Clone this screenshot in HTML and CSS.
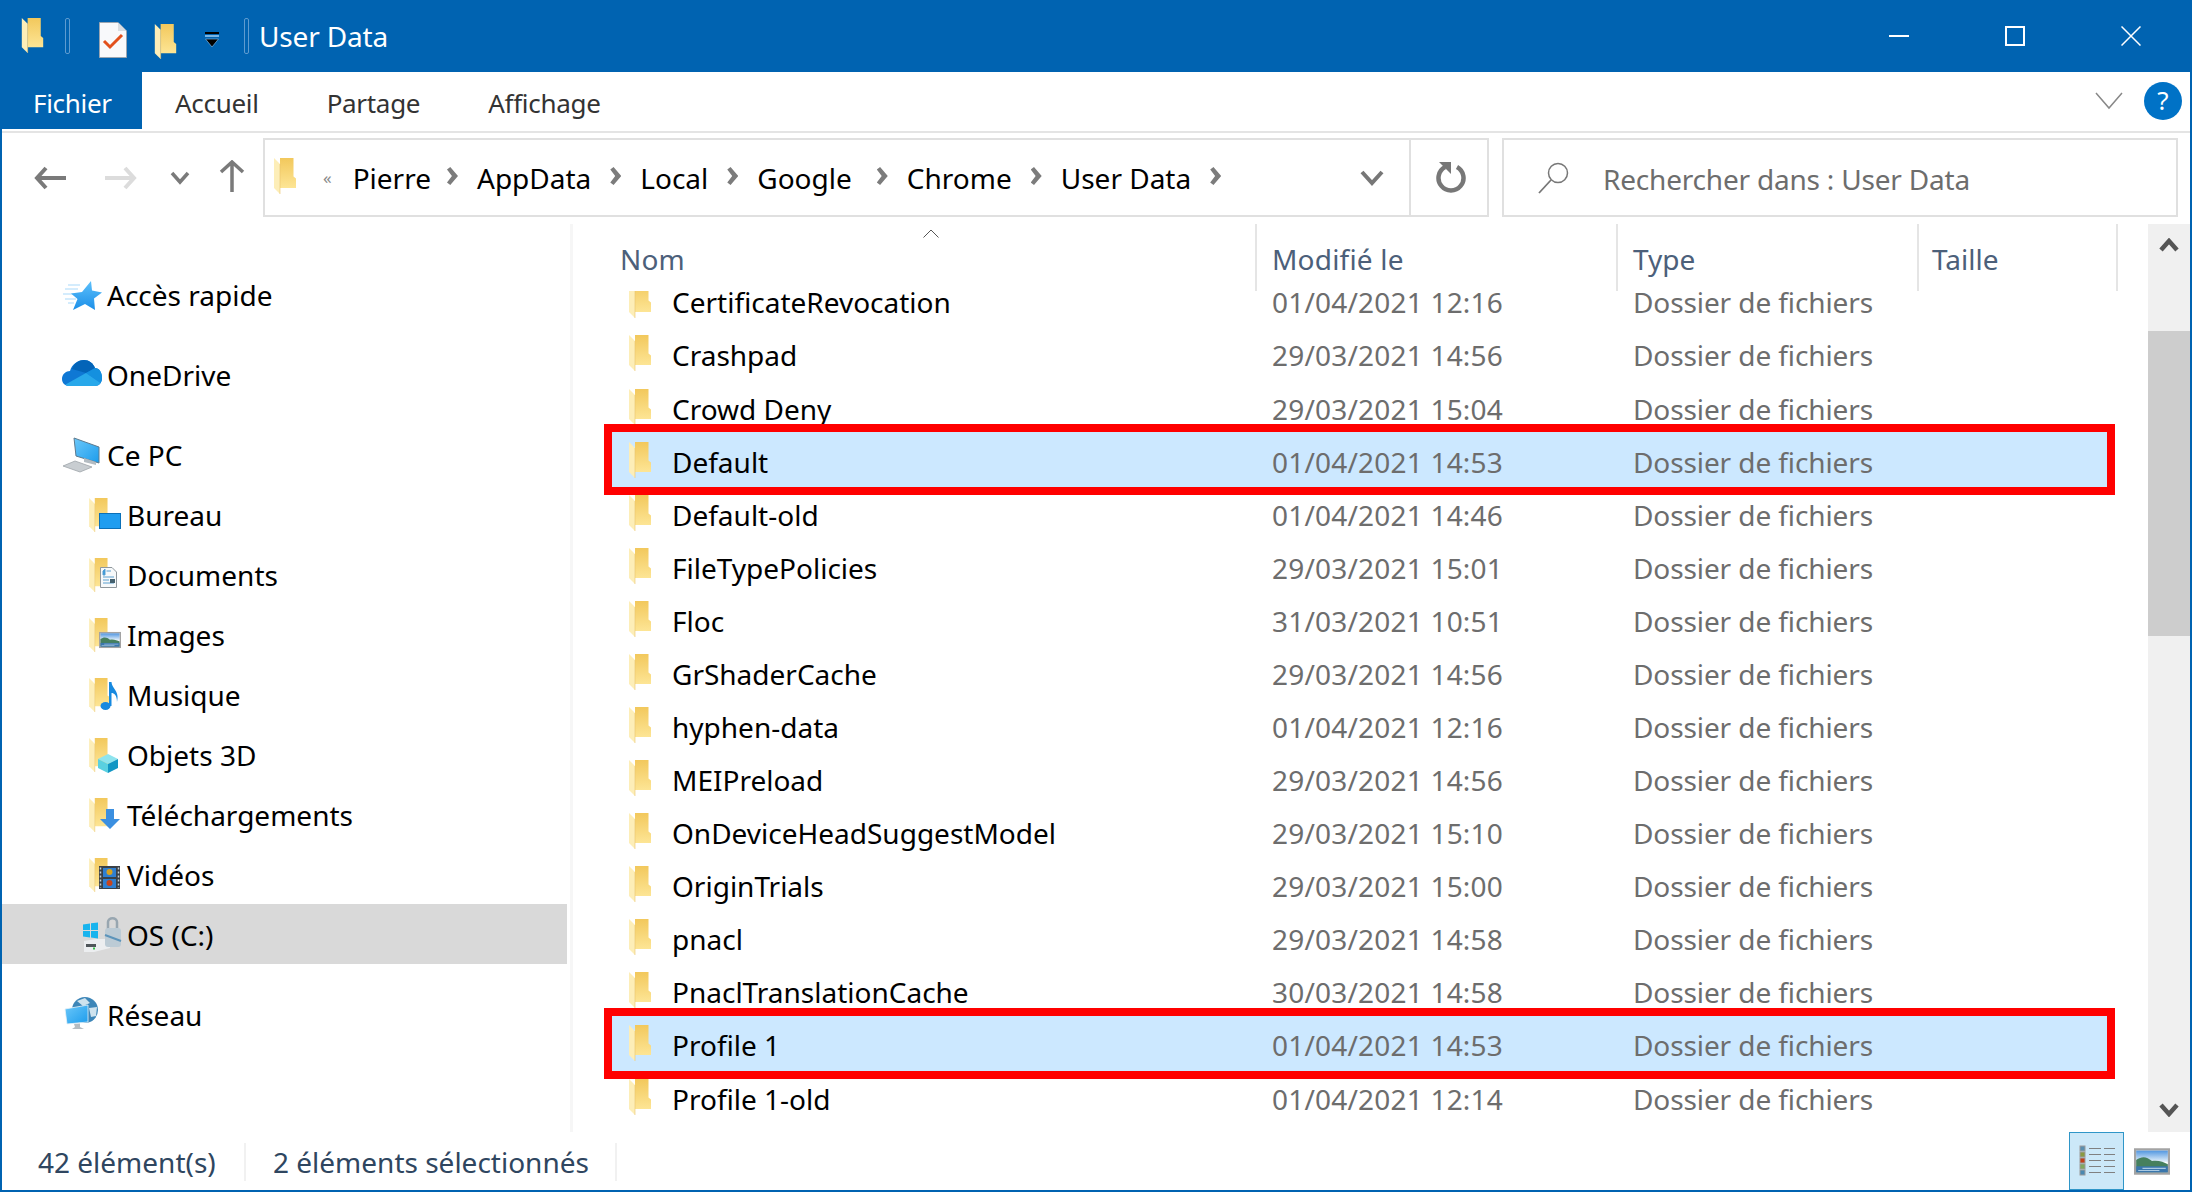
FILE: index.html
```html
<!DOCTYPE html>
<html lang="fr">
<head>
    <meta charset="UTF-8">
    <title>User Data</title>
    <link rel="stylesheet" href="styles.css">
</head>
<body>

    <!-- Shared shapes -->
    <svg class="sprite" width="0" height="0">
        <defs>
            <linearGradient id="folderBack" x1="0" y1="0" x2="0" y2="1">
                <stop offset="0" stop-color="#f2c85c"/>
                <stop offset="1" stop-color="#fde595"/>
            </linearGradient>
            <linearGradient id="starFill" x1="0" y1="0" x2="0" y2="1">
                <stop offset="0" stop-color="#5cc0fb"/>
                <stop offset="1" stop-color="#1c8fe8"/>
            </linearGradient>
            <linearGradient id="screenFill" x1="0" y1="0" x2="1" y2="1">
                <stop offset="0" stop-color="#6cc8fa"/>
                <stop offset="1" stop-color="#1c9cec"/>
            </linearGradient>
            <linearGradient id="skyFill" x1="0" y1="0" x2="0" y2="1">
                <stop offset="0" stop-color="#4f95e0"/>
                <stop offset="1" stop-color="#e8f3fb"/>
            </linearGradient>
            <symbol id="folder" viewBox="0 0 22 36">
                <path d="M0 0H19.500V18.500L22 20.500V30H6V0Z" fill="url(#folderBack)"/>
                <path d="M0 0L6 6V36L0 30Z" fill="#fdeeb8"/>
                <path d="M6 6V36" stroke="#e9c56c" stroke-width="0.600"/>
            </symbol>
            <symbol id="photo" viewBox="0 0 34 25">
                <rect x="0" y="0" width="34" height="25" fill="#fff"/>
                <rect x="2" y="2" width="30" height="11" fill="url(#skyFill)"/>
                <path d="M2 11C8 7 12 8 17 12C23 11 28 13 32 15V23H2Z" fill="#46805e"/>
                <rect x="2" y="17" width="30" height="6" fill="#3a76ac"/>
                <path d="M8 19H30M4 21H24" stroke="#a9c9e2" stroke-width="1"/>
                <rect x="1" y="1" width="32" height="23" fill="none" stroke="#a3a3a3" stroke-width="2"/>
            </symbol>
        </defs>
    </svg>

    <div class="window">

        <!-- Title bar -->
        <div class="titlebar">
            <svg class="qa-folder first"><use href="#folder"/></svg>
            <span class="qa-sep sep-one"></span>
            <svg class="qa-doc" viewBox="0 0 28 36">
                <path d="M0.500 0.500H19L27.500 9V35.500H0.500Z" fill="#f8f9fb" stroke="#9aa5b1"/>
                <path d="M19 0.500V9H27.500Z" fill="#d8dde2"/>
                <path d="M5 19L11 25L23 13" fill="none" stroke="#e2501c" stroke-width="3"/>
            </svg>
            <svg class="qa-folder second"><use href="#folder"/></svg>
            <svg class="qa-drop" viewBox="0 0 14 16">
                <rect x="0" y="0" width="14" height="2" fill="#000"/>
                <rect x="0" y="3" width="14" height="2" fill="#79b4e4"/>
                <path d="M0.500 7H13.500L7 15Z" fill="#000" stroke="#79b4e4" stroke-width="0.700"/>
            </svg>
            <span class="qa-sep sep-two"></span>
            <span class="title-text">User Data</span>
            <div class="win-controls">
                <span class="win-btn"><svg width="20" height="20"><rect x="0" y="9" width="20" height="2" fill="#fff"/></svg></span>
                <span class="win-btn"><svg width="20" height="20"><rect x="1" y="1" width="18" height="18" fill="none" stroke="#fff" stroke-width="2"/></svg></span>
                <span class="win-btn"><svg width="20" height="20"><path d="M0.500 0.500L19.500 19.500M19.500 0.500L0.500 19.500" stroke="#fff" stroke-width="1.500"/></svg></span>
            </div>
        </div>

        <!-- Ribbon tabs -->
        <div class="ribbon">
            <span class="tab tab-file">Fichier</span>
            <span class="tab tab-home">Accueil</span>
            <span class="tab tab-next">Partage</span>
            <span class="tab tab-next">Affichage</span>
            <svg class="ribbon-chevron" width="28" height="18" viewBox="0 0 28 18"><path d="M1 1L14 16L27 1" fill="none" stroke="#888" stroke-width="1.500"/></svg>
            <span class="help">?</span>
        </div>

        <!-- Address row -->
        <div class="address-row">
            <div class="nav-buttons">
                <svg class="nav-back" width="32" height="24" viewBox="0 0 32 24"><path d="M12 2L3 12L12 22M3 12H32" fill="none" stroke="#7a7a7a" stroke-width="4"/></svg>
                <svg class="nav-forward" width="32" height="24" viewBox="0 0 32 24"><path d="M20 2L29 12L20 22M29 12H0" fill="none" stroke="#dcdcdc" stroke-width="4"/></svg>
                <svg class="nav-recent" width="20" height="14" viewBox="0 0 20 14"><path d="M2 2L10 11L18 2" fill="none" stroke="#7a7a7a" stroke-width="3.500"/></svg>
                <svg class="nav-up" width="26" height="32" viewBox="0 0 26 32"><path d="M2 12L13 2L24 12M13 2V32" fill="none" stroke="#7a7a7a" stroke-width="3.500"/></svg>
            </div>
            <div class="address-box">
                <svg class="addr-folder"><use href="#folder"/></svg>
                <span class="addr-more">«</span>
                <span class="crumb crumb-first">Pierre</span><i class="crumb-arrow"></i>
                <span class="crumb">AppData</span><i class="crumb-arrow"></i>
                <span class="crumb">Local</span><i class="crumb-arrow"></i>
                <span class="crumb crumb-google">Google</span><i class="crumb-arrow"></i>
                <span class="crumb">Chrome</span><i class="crumb-arrow"></i>
                <span class="crumb">User Data</span><i class="crumb-arrow"></i>
                <svg class="addr-drop" width="24" height="16" viewBox="0 0 24 16"><path d="M2 2L12 13L22 2" fill="none" stroke="#777" stroke-width="4"/></svg>
                <span class="addr-refresh">
                    <svg width="30" height="36" viewBox="0 0 30 36"><path d="M9 7A12.500 12.500 0 1 0 21 7" fill="none" stroke="#777" stroke-width="4.500"/><path d="M3 2H15V14Z" fill="#777"/></svg>
                </span>
            </div>
            <div class="search-box">
                <svg width="32" height="32" viewBox="0 0 32 32"><circle cx="20" cy="11" r="9.500" fill="none" stroke="#777" stroke-width="1.500"/><path d="M13 18L1 31" stroke="#777" stroke-width="1.800"/></svg>
                <span class="search-text">Rechercher dans : User Data</span>
            </div>
        </div>

        <div class="main">

            <!-- Navigation pane -->
            <div class="sidebar">
                <div class="nav-group">
                    <div class="nav-item top">
                        <svg class="nav-icon wide" viewBox="0 0 44 40">
                            <path d="M8 11H20M5 15H18M3 20H15M5 25H16M8 29H14" stroke="#a9d9fa" stroke-width="1"/>
                            <path d="M31 7L32 16.500L42 18.500L34 24.500L35 36L25 30L13 36L17.500 25L11 19.500L22 18Z" fill="url(#starFill)"/>
                        </svg>
                        <span>Accès rapide</span>
                    </div>
                </div>
                <div class="nav-group">
                    <div class="nav-item top">
                        <svg class="nav-icon wide" viewBox="0 0 44 40">
                            <path d="M2 25C2 20 6 17 10 17C12 10 18 6 24 6C29 6 33 9 35 14C39 14 42 18 42 24C42 29 39 32 35 32H9C5 32 2 29 2 25Z" fill="#0f78d4"/>
                            <path d="M12 15C14 9 19 6 24 6C29 6 33 9 35 14L26 19Z" fill="#0364b8"/>
                            <path d="M26 19L35 14C39 14 42 18 42 24C42 26 41.500 27.500 40.500 29Z" fill="#1490df"/>
                            <path d="M5.500 30.500L26 19L40.500 29C39.500 31 37 32 35 32H9C7.500 32 6.500 31.500 5.500 30.500Z" fill="#28a8ea"/>
                        </svg>
                        <span>OneDrive</span>
                    </div>
                </div>
                <div class="nav-group">
                    <div class="nav-item top">
                        <svg class="nav-icon wide" viewBox="0 0 44 40">
                            <path d="M14 4L39 13V29L16 22Z" fill="url(#screenFill)" stroke="#5d7a8e" stroke-width="1"/>
                            <path d="M24 24L36 28V31L24 28Z" fill="#b4bcc2"/>
                            <path d="M3 32L15 27L32 33L20 38Z" fill="#c8cdd1" stroke="#9ea5aa" stroke-width="0.800"/>
                        </svg>
                        <span>Ce PC</span>
                    </div>
                    <div class="nav-item child">
                        <svg class="nav-icon">
                            <use href="#folder" x="3" y="4" width="21" height="34"/>
                            <rect x="13.500" y="19.500" width="21" height="15" fill="#1f9df0" stroke="#0b70b8"/>
                        </svg>
                        <span>Bureau</span>
                    </div>
                    <div class="nav-item child">
                        <svg class="nav-icon">
                            <use href="#folder" x="3" y="4" width="21" height="34"/>
                            <path d="M14.500 13.500H26L30.500 18V33.500H14.500Z" fill="#f7f9fa" stroke="#8f979c"/>
                            <path d="M17 17L19 15V21H17ZM20.500 17H25M17 23H28M17 26H23M17 29H28" fill="#2a97e0" stroke="#5a9fcf"/>
                            <rect x="24" y="25" width="5" height="4" fill="#44606e"/>
                        </svg>
                        <span>Documents</span>
                    </div>
                    <div class="nav-item child">
                        <svg class="nav-icon">
                            <use href="#folder" x="3" y="4" width="21" height="34"/>
                            <use href="#photo" x="13" y="17.500" width="22" height="17"/>
                        </svg>
                        <span>Images</span>
                    </div>
                    <div class="nav-item child">
                        <svg class="nav-icon">
                            <use href="#folder" x="3" y="4" width="21" height="34"/>
                            <ellipse cx="19.500" cy="32" rx="5" ry="4" fill="#1689e0"/>
                            <path d="M23 32V8H25.500C26 15 34 17 31 28C31 21 28 19 25.500 19V32Z" fill="#1689e0"/>
                        </svg>
                        <span>Musique</span>
                    </div>
                    <div class="nav-item child">
                        <svg class="nav-icon">
                            <use href="#folder" x="3" y="4" width="21" height="34"/>
                            <path d="M12 25L22 20L32 25L22 30Z" fill="#8fe4ee"/>
                            <path d="M12 25L22 30V39L12 34Z" fill="#5ad0e0"/>
                            <path d="M32 25L22 30V39L32 34Z" fill="#1296c4"/>
                        </svg>
                        <span>Objets 3D</span>
                    </div>
                    <div class="nav-item child">
                        <svg class="nav-icon">
                            <use href="#folder" x="3" y="4" width="21" height="34"/>
                            <path d="M20 15H28V25H34L24 35L14 25H20Z" fill="#3b8fe0"/>
                        </svg>
                        <span>Téléchargements</span>
                    </div>
                    <div class="nav-item child">
                        <svg class="nav-icon">
                            <use href="#folder" x="3" y="4" width="21" height="34"/>
                            <rect x="13" y="12" width="21" height="23" fill="#3a4046"/>
                            <path d="M14.500 13.500V34" stroke="#c8ced2" stroke-width="1.500" stroke-dasharray="2 2"/>
                            <path d="M32.500 13.500V34" stroke="#c8ced2" stroke-width="1.500" stroke-dasharray="2 2"/>
                            <rect x="17" y="14" width="13" height="9" fill="#2f7fd0"/>
                            <rect x="17" y="25" width="13" height="9" fill="#2f7fd0"/>
                            <circle cx="23.500" cy="18" r="3" fill="#d9a21e"/>
                            <circle cx="23.500" cy="29" r="3" fill="#c8441c"/>
                        </svg>
                        <span>Vidéos</span>
                    </div>
                    <div class="nav-item child current">
                        <svg class="nav-icon">
                            <path d="M-2 27L10 25H24V34L8 38H-2Z" fill="#eceef0"/>
                            <path d="M0 30H10V33H0Z" fill="#50565a"/>
                            <rect x="7" y="33.500" width="2" height="2" fill="#35c24a"/>
                            <path d="M-3 10.500L4 9.500V16H-3ZM5 9.300L12 8.500V16H5ZM-3 17H4V23.500L-3 22.500ZM5 17H12V24.500L5 23.500Z" fill="#18b4ee"/>
                            <path d="M22 15V8C22 3 31 3 31 8V15" fill="none" stroke="#98a6b0" stroke-width="2.500"/>
                            <rect x="19" y="14" width="16" height="19" rx="3" fill="#bccbd5"/>
                            <path d="M19 21L35 27" stroke="#5c94ba" stroke-width="2"/>
                        </svg>
                        <span>OS (C:)</span>
                    </div>
                </div>
                <div class="nav-group">
                    <div class="nav-item top network">
                        <svg class="nav-icon wide" viewBox="0 0 44 40">
                            <circle cx="25" cy="16" r="13" fill="#3d86b8"/>
                            <path d="M17 7L25 4L30 9L23 12ZM29 14L37 13L36 22L31 23Z" fill="#cfe3ee"/>
                            <path d="M5 15L28 11V28L7 30Z" fill="url(#screenFill)" stroke="#e8f2f8" stroke-width="0.800"/>
                            <path d="M14 30L20 29.500V33L24 35H12L15 33Z" fill="#b4bcc2"/>
                        </svg>
                        <span>Réseau</span>
                    </div>
                </div>
            </div>

            <!-- File list -->
            <div class="files">
                <div class="file-header">
                    <svg class="sort-arrow" width="16" height="9" viewBox="0 0 16 9"><path d="M0.500 8.500L8 1L15.500 8.500" fill="none" stroke="#555" stroke-width="1"/></svg>
                    <span class="head-col head-name">Nom</span>
                    <span class="head-col head-date">Modifié le</span>
                    <span class="head-col head-type">Type</span>
                    <span class="head-col head-size">Taille</span>
                </div>
                <div class="file-list">
                    <div class="file-row"><span class="col-name"><svg class="file-icon"><use href="#folder"/></svg>CertificateRevocation</span><span class="col-date">01/04/2021 12:16</span><span class="col-type">Dossier de fichiers</span></div>
                    <div class="file-row"><span class="col-name"><svg class="file-icon"><use href="#folder"/></svg>Crashpad</span><span class="col-date">29/03/2021 14:56</span><span class="col-type">Dossier de fichiers</span></div>
                    <div class="file-row"><span class="col-name"><svg class="file-icon"><use href="#folder"/></svg>Crowd Deny</span><span class="col-date">29/03/2021 15:04</span><span class="col-type">Dossier de fichiers</span></div>
                    <div class="file-row selected"><span class="col-name"><svg class="file-icon"><use href="#folder"/></svg>Default</span><span class="col-date">01/04/2021 14:53</span><span class="col-type">Dossier de fichiers</span></div>
                    <div class="file-row"><span class="col-name"><svg class="file-icon"><use href="#folder"/></svg>Default-old</span><span class="col-date">01/04/2021 14:46</span><span class="col-type">Dossier de fichiers</span></div>
                    <div class="file-row"><span class="col-name"><svg class="file-icon"><use href="#folder"/></svg>FileTypePolicies</span><span class="col-date">29/03/2021 15:01</span><span class="col-type">Dossier de fichiers</span></div>
                    <div class="file-row"><span class="col-name"><svg class="file-icon"><use href="#folder"/></svg>Floc</span><span class="col-date">31/03/2021 10:51</span><span class="col-type">Dossier de fichiers</span></div>
                    <div class="file-row"><span class="col-name"><svg class="file-icon"><use href="#folder"/></svg>GrShaderCache</span><span class="col-date">29/03/2021 14:56</span><span class="col-type">Dossier de fichiers</span></div>
                    <div class="file-row"><span class="col-name"><svg class="file-icon"><use href="#folder"/></svg>hyphen-data</span><span class="col-date">01/04/2021 12:16</span><span class="col-type">Dossier de fichiers</span></div>
                    <div class="file-row"><span class="col-name"><svg class="file-icon"><use href="#folder"/></svg>MEIPreload</span><span class="col-date">29/03/2021 14:56</span><span class="col-type">Dossier de fichiers</span></div>
                    <div class="file-row"><span class="col-name"><svg class="file-icon"><use href="#folder"/></svg>OnDeviceHeadSuggestModel</span><span class="col-date">29/03/2021 15:10</span><span class="col-type">Dossier de fichiers</span></div>
                    <div class="file-row"><span class="col-name"><svg class="file-icon"><use href="#folder"/></svg>OriginTrials</span><span class="col-date">29/03/2021 15:00</span><span class="col-type">Dossier de fichiers</span></div>
                    <div class="file-row"><span class="col-name"><svg class="file-icon"><use href="#folder"/></svg>pnacl</span><span class="col-date">29/03/2021 14:58</span><span class="col-type">Dossier de fichiers</span></div>
                    <div class="file-row"><span class="col-name"><svg class="file-icon"><use href="#folder"/></svg>PnaclTranslationCache</span><span class="col-date">30/03/2021 14:58</span><span class="col-type">Dossier de fichiers</span></div>
                    <div class="file-row selected"><span class="col-name"><svg class="file-icon"><use href="#folder"/></svg>Profile 1</span><span class="col-date">01/04/2021 14:53</span><span class="col-type">Dossier de fichiers</span></div>
                    <div class="file-row"><span class="col-name"><svg class="file-icon"><use href="#folder"/></svg>Profile 1-old</span><span class="col-date">01/04/2021 12:14</span><span class="col-type">Dossier de fichiers</span></div>
                </div>
            </div>

            <!-- Scrollbar -->
            <div class="scrollbar">
                <svg class="scroll-up" width="20" height="14" viewBox="0 0 20 14"><path d="M2 12L10 3L18 12" fill="none" stroke="#555" stroke-width="4.500"/></svg>
                <div class="scroll-thumb"></div>
                <svg class="scroll-down" width="20" height="14" viewBox="0 0 20 14"><path d="M2 2L10 11L18 2" fill="none" stroke="#555" stroke-width="4.500"/></svg>
            </div>
        </div>

        <!-- Status bar -->
        <div class="statusbar">
            <span class="status-count">42 élément(s)</span>
            <span class="status-selected">2 éléments sélectionnés</span>
            <div class="view-buttons">
                <span class="view-btn active">
                    <svg width="36" height="32" viewBox="0 0 36 32">
                        <rect x="1" y="1" width="5" height="5" fill="#5a8fb0" stroke="#9a9a9a"/>
                        <rect x="1" y="7" width="5" height="5" fill="#8a9a40" stroke="#9a9a9a"/>
                        <rect x="1" y="13" width="5" height="5" fill="#c2401c" stroke="#9a9a9a"/>
                        <rect x="1" y="19" width="5" height="5" fill="#7fa860" stroke="#9a9a9a"/>
                        <rect x="1" y="25" width="5" height="5" fill="#4a88b0" stroke="#9a9a9a"/>
                        <path d="M10 3.500H22M25 3.500H36M10 9.500H22M25 9.500H36M10 15.500H22M25 15.500H36M10 21.500H22M25 21.500H36M10 27.500H22M25 27.500H36" stroke="#808080" stroke-width="1"/>
                    </svg>
                </span>
                <svg class="view-large" width="36" height="27"><use href="#photo"/></svg>
            </div>
        </div>
    </div>

</body>
</html>
```

FILE: styles.css
```css
/* Global Styles */
* {
    box-sizing: border-box;
}

html, body {
    margin: 0;
    padding: 0;
    background: #fff;
}

body {
    font-family: "Noto Sans", sans-serif;
    font-size: 28px;
    color: #000;
}

.sprite {
    position: absolute;
}

.window {
    width: 2192px;
    height: 1192px;
    display: flex;
    flex-direction: column;
    border: 2px solid #0063b1;
    border-top: none;
    overflow: hidden;
}

/* Title bar */
.titlebar {
    height: 72px;
    flex: none;
    display: flex;
    align-items: center;
    background: #0063b1;
    color: #fff;
    margin: 0 -2px;
    padding-left: 21px;
}

.qa-folder {
    width: 23px;
    height: 35px;
    flex: none;
}

.qa-folder.first {
    margin-top: -2px;
}

.qa-folder.second {
    margin-left: 27px;
    margin-top: 10px;
}

.qa-sep {
    width: 5px;
    height: 36px;
    flex: none;
    border: 1px solid #5e9bd0;
    border-radius: 2px;
}

.sep-one {
    margin-left: 21px;
}

.sep-two {
    margin-left: 25px;
}

.qa-doc {
    width: 28px;
    height: 36px;
    flex: none;
    margin-left: 29px;
    margin-top: 8px;
}

.qa-drop {
    width: 14px;
    height: 16px;
    flex: none;
    margin-left: 28px;
    margin-top: 8px;
}

.title-text {
    margin-left: 10px;
    letter-spacing: -0.15px;
}

.win-controls {
    margin-left: auto;
    display: flex;
    padding-right: 51px;
    gap: 96px;
}

.win-btn {
    display: flex;
    width: 20px;
    height: 20px;
}

/* Ribbon */
.ribbon {
    height: 61px;
    flex: none;
    display: flex;
    align-items: flex-start;
    border-bottom: 2px solid #e4e4e4;
}

.tab {
    line-height: 52px;
    padding-top: 5px;
    font-size: 26px;
    letter-spacing: -0.3px;
    color: #333;
}

.tab-file {
    width: 140px;
    height: 57px;
    background: #0063b1;
    color: #fff;
    padding-left: 31px;
}

.tab-home {
    margin-left: 33px;
}

.tab-next {
    margin-left: 68px;
}

.ribbon-chevron {
    margin-left: auto;
    margin-top: 20px;
}

.help {
    width: 38px;
    height: 38px;
    margin: 10px 8px 0 21px;
    border-radius: 50%;
    background: #0072c6;
    color: #fff;
    text-align: center;
    line-height: 36px;
    font-size: 26px;
}

/* Address row */
.address-row {
    height: 91px;
    flex: none;
    display: flex;
    align-items: flex-start;
    padding-top: 5px;
}

.nav-buttons {
    width: 261px;
    height: 79px;
    flex: none;
    display: flex;
    align-items: center;
    padding-left: 32px;
}

.nav-forward {
    margin-left: 39px;
}

.nav-recent {
    margin-left: 33px;
}

.nav-up {
    margin-left: 29px;
    margin-top: -3px;
}

.address-box {
    width: 1226px;
    height: 79px;
    flex: none;
    display: flex;
    align-items: center;
    border: 2px solid #e0e0e0;
    padding-left: 8px;
}

.addr-folder {
    width: 24px;
    height: 36px;
    flex: none;
    margin-top: -3px;
}

.addr-more {
    margin-left: 26px;
    font-size: 17px;
    color: #888;
}

.crumb {
    margin-top: 1px;
}

.crumb-first {
    margin-left: 21px;
    margin-right: -3px;
}

.crumb-google {
    margin-right: 6px;
}

.crumb-arrow {
    width: 11px;
    height: 18px;
    flex: none;
    margin: -3px 19px 0;
    background: #7c7c7c;
    clip-path: polygon(0 14%, 30% 0, 100% 50%, 30% 100%, 0 86%, 45% 50%);
}

.addr-drop {
    margin-left: auto;
    margin-right: 25px;
}

.addr-refresh {
    width: 78px;
    height: 100%;
    flex: none;
    display: flex;
    align-items: center;
    justify-content: center;
    border-left: 2px solid #e0e0e0;
    padding-left: 3px;
}

.search-box {
    width: 676px;
    height: 79px;
    flex: none;
    margin-left: 13px;
    display: flex;
    align-items: center;
    border: 2px solid #e0e0e0;
    padding-left: 34px;
}

.search-text {
    margin-left: 33px;
    margin-top: 2px;
    letter-spacing: -0.2px;
    color: #6d6d6d;
}

/* Main area */
.main {
    flex: 1;
    display: flex;
    min-height: 0;
}

.sidebar {
    width: 571px;
    flex: none;
    display: flex;
    flex-direction: column;
    gap: 20px;
    padding-top: 40px;
    padding-right: 3px;
    border-right: 3px solid #f6f6f6;
}

.nav-item {
    height: 60px;
    display: flex;
    align-items: center;
}

.nav-item span {
    margin-top: 1px;
}

.nav-item.top {
    padding-left: 58px;
}

.nav-item.child {
    padding-left: 84px;
}

.nav-item.current {
    background: #d9d9d9;
}

.nav-icon {
    width: 41px;
    height: 40px;
    flex: none;
    overflow: visible;
}

.nav-icon.wide {
    width: 44px;
    margin-right: 3px;
}

/* File list */
.files {
    flex: 1;
    min-width: 0;
    overflow: hidden;
}

/* header covers the top of the first row */
.file-header {
    height: 67px;
    display: flex;
    padding: 16px 0 0 47px;
    background: #fff;
    color: #4c607a;
    position: relative;
    z-index: 2;
}

.sort-arrow {
    position: absolute;
    left: 350px;
    top: 5px;
}

.head-col::after {
    content: "";
    position: absolute;
    top: 0;
    width: 2px;
    height: 67px;
    background: #e5e5e5;
}

.head-name {
    width: 652px;
    letter-spacing: 0.1px;
}

.head-name::after {
    left: 682px;
}

.head-date {
    width: 361px;
    letter-spacing: 0.2px;
}

.head-date::after {
    left: 1043px;
}

.head-type {
    width: 299px;
}

.head-type::after {
    left: 1344px;
}

.head-size::after {
    left: 1543px;
}

.file-list {
    margin-top: -17.200px;
    padding-left: 40px;
}

.file-row {
    width: 1493px;
    height: 53.090px;
    display: flex;
    align-items: center;
    position: relative;
}

.file-row.selected {
    z-index: 1;
    background: #cce8ff;
    box-shadow: 0 0 0 1px #cce8ff, 0 0 0 9px #ff0000;
}

.col-name {
    width: 659px;
    flex: none;
    display: flex;
    align-items: center;
    padding-top: 4px;
}

.col-date {
    width: 361px;
    flex: none;
    letter-spacing: 0.2px;
    color: #6d6d6d;
    padding-top: 4px;
}

.col-type {
    flex: none;
    letter-spacing: -0.1px;
    color: #6d6d6d;
    padding-top: 4px;
}

.file-icon {
    width: 22px;
    height: 36px;
    flex: none;
    margin: -4px 21px 0 16px;
}

/* Scrollbar */
.scrollbar {
    width: 42px;
    flex: none;
    background: #f0f0f0;
    display: flex;
    flex-direction: column;
    align-items: center;
    padding-top: 14px;
}

.scroll-thumb {
    width: 100%;
    height: 305px;
    margin-top: 79px;
    background: #cdcdcd;
}

.scroll-down {
    margin-top: auto;
    margin-bottom: 15px;
}

/* Status bar */
.statusbar {
    height: 58px;
    flex: none;
    display: flex;
    align-items: center;
    padding-top: 2px;
    color: #2f4660;
}

.status-count {
    width: 244px;
    padding-left: 36px;
    border-right: 2px solid #f1f1f1;
}

.status-selected {
    width: 371px;
    padding-left: 27px;
    border-right: 2px solid #f1f1f1;
}

.view-buttons {
    margin-left: auto;
    display: flex;
    align-items: center;
    gap: 10px;
    padding-right: 20px;
    height: 100%;
    margin-top: -2px;
}

.view-btn {
    width: 55px;
    height: 58px;
    display: flex;
    align-items: center;
    justify-content: center;
    background: #cce8f8;
    border: 1px solid #2f96c8;
}
```
